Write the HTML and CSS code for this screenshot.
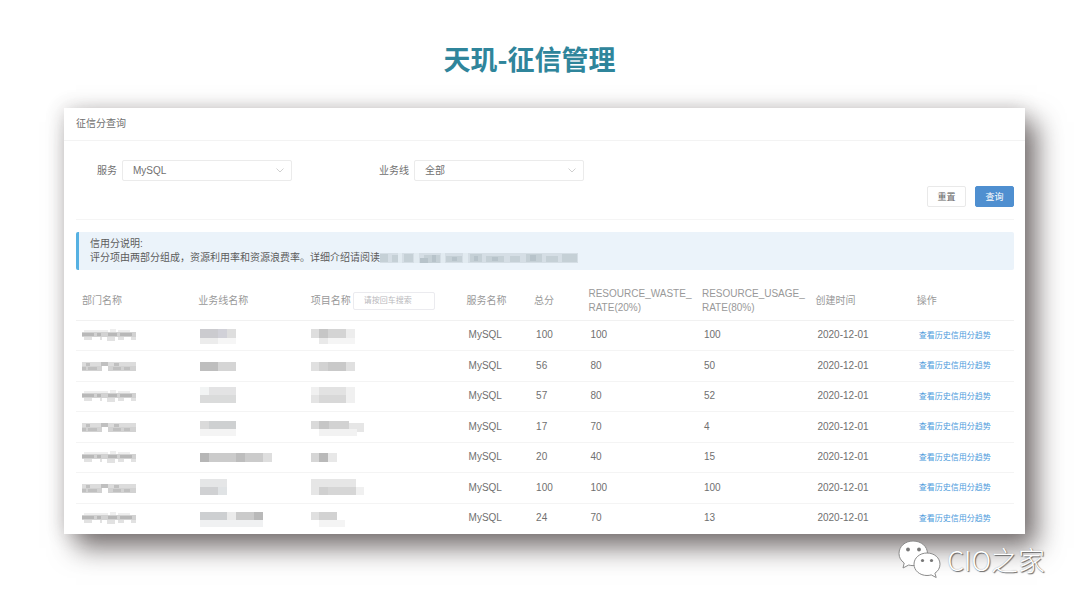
FILE: index.html
```html
<!DOCTYPE html>
<html lang="zh-CN">
<head>
<meta charset="utf-8">
<title>天玑-征信管理</title>
<link rel="stylesheet" href="styles.css">
</head>
<body>
<svg class="defs" aria-hidden="true">
  <symbol id="dept-a" viewBox="0 0 58 14">
    <path d="M2 2h24v2H2zM28 1h6v3h-6zM36 2h12v2H36z" fill="#eeeeee"/>
    <path d="M0 4h54v5H0z" fill="#d2d2d2"/>
    <path d="M0 5h12v3H0zM15 5h4v3h-4zM26 5h9v3h-9zM38 5h12v3H38z" fill="#b8b8b8"/>
    <path d="M2 9h8v3H2zM18 9h2v3h-2zM25 9h8v4h-8zM36 9h6v3h-6zM49 9h5v3h-5z" fill="#e2e2e2"/>
  </symbol>
  <symbol id="dept-b" viewBox="0 0 58 14">
    <path d="M0 3h54v4H0z" fill="#dcdcdc"/>
    <path d="M0 7h20v5H0zM26 7h28v5H26z" fill="#d2d2d2"/>
    <path d="M4 4h4v3H4zM19 3h7v4h-7zM32 4h5v3h-5zM0 8h4v3H0zM6 8h9v3H6zM31 8h8v3h-8zM42 8h6v3h-6z" fill="#c0c0c0"/>
  </symbol>
</svg>
<main class="slide">
  <h1 class="title">天玑-征信管理</h1>
  <section class="card">
    <h2 class="card-title">征信分查询</h2>
    <div class="card-body">
      <form class="filters">
        <div class="fields">
          <div class="field">
            <label for="service">服务</label>
            <span class="select-box">
              <select id="service"><option>MySQL</option></select>
              <svg class="chevron" viewBox="0 0 8 5"><path d="M.5.5 4 4 7.5.5"/></svg>
            </span>
          </div>
          <div class="field">
            <label for="line">业务线</label>
            <span class="select-box">
              <select id="line"><option>全部</option></select>
              <svg class="chevron" viewBox="0 0 8 5"><path d="M.5.5 4 4 7.5.5"/></svg>
            </span>
          </div>
        </div>
        <div class="actions">
          <button class="btn" type="reset">重置</button>
          <button class="btn primary" type="button">查询</button>
        </div>
      </form>
      <div class="notice">
        <p>信用分说明:</p>
        <p class="notice-line">评分项由两部分组成，资源利用率和资源浪费率。详细介绍请阅读
          <svg class="masked-link" viewBox="0 0 198 10" preserveAspectRatio="none">
            <path d="M0 0h198v10H0z" fill="#d5dee5"/>
            <path d="M0 1h8v8H0zM12 2h6v7h-6zM24 1h9v8h-9zM44 2h16v8H44zM66 3h16v6H66zM90 1h12v8H90zM106 3h18v6h-18zM130 3h10v6h-10zM146 1h16v8h-16zM166 3h12v6h-12zM182 1h15v8h-15z" fill="#c5d0d6"/>
            <path d="M40 5h8v5h-8zM52 2h4v7h-4zM72 4h5v4h-5zM94 3h4v5h-4zM112 4h6v4h-6zM150 2h6v6h-6z" fill="#b7c3ca"/>
            <path d="M18 0h4v10h-4zM34 0h5v10h-5zM61 0h4v10h-4zM83 0h5v10h-5z" fill="#e2ebf1"/>
          </svg>
        </p>
      </div>
      <table class="scores">
        <colgroup>
          <col class="c-dept"><col class="c-line"><col class="c-project"><col class="c-service"><col class="c-total"><col class="c-rate"><col class="c-rate"><col class="c-date"><col class="c-action">
        </colgroup>
        <thead>
          <tr>
            <th>部门名称</th><th>业务线名称</th>
            <th><span class="search"><label for="project">项目名称</label><input id="project" type="text" placeholder="请按回车搜索"></span></th>
            <th>服务名称</th><th>总分</th><th>RESOURCE_WASTE_<wbr>RATE(20%)</th><th>RESOURCE_USAGE_<wbr>RATE(80%)</th><th>创建时间</th><th>操作</th>
          </tr>
        </thead>
        <tbody>
          <tr>
            <td class="masked"><svg class="dept"><use href="#dept-a"/></svg></td>
            <td class="masked"><svg class="mosaic" viewBox="0 0 78 20"><path d="M2 4h27v9H2z" fill="#cbcbcf"/><path d="M20 4h9v9h-9z" fill="#d1d1d8"/><path d="M29 4h9v9h-9z" fill="#dedede"/><path d="M2 13h18v6H2z" fill="#ececec"/><path d="M20 13h18v6H20z" fill="#f6f6f6"/></svg></td>
            <td class="masked"><svg class="mosaic" viewBox="0 0 78 20"><path d="M0 4h8v9H0z" fill="#dedede"/><path d="M8 4h9v9H8z" fill="#c6c6c6"/><path d="M17 4h18v9H17z" fill="#d4d4d4"/><path d="M35 4h9v9h-9z" fill="#ededed"/><path d="M8 13h9v6H8z" fill="#e9e9e9"/><path d="M17 13h27v6H17z" fill="#f5f5f5"/></svg></td>
            <td>MySQL</td><td>100</td><td>100</td><td>100</td><td>2020-12-01</td><td><a href="#trend">查看历史信用分趋势</a></td>
          </tr>
          <tr>
            <td class="masked"><svg class="dept"><use href="#dept-b"/></svg></td>
            <td class="masked"><svg class="mosaic" viewBox="0 0 78 20"><path d="M2 6h18v9H2z" fill="#bebebe"/><path d="M20 6h18v9H20z" fill="#d5d5d5"/></svg></td>
            <td class="masked"><svg class="mosaic" viewBox="0 0 78 20"><path d="M0 6h44v9H0z" fill="#e0e0e0"/><path d="M8 6h9v9H8z" fill="#d2d2d2"/><path d="M17 6h18v9H17z" fill="#c9c9c9"/></svg></td>
            <td>MySQL</td><td>56</td><td>80</td><td>50</td><td>2020-12-01</td><td><a href="#trend">查看历史信用分趋势</a></td>
          </tr>
          <tr>
            <td class="masked"><svg class="dept"><use href="#dept-a"/></svg></td>
            <td class="masked"><svg class="mosaic" viewBox="0 0 78 20"><path d="M2 1h9v8H2z" fill="#f2f4f4"/><path d="M11 1h27v8H11z" fill="#e3e3e4"/><path d="M2 9h36v8H2z" fill="#dadbdb"/></svg></td>
            <td class="masked"><svg class="mosaic" viewBox="0 0 78 20"><path d="M0 1h44v16H0z" fill="#f0f0f0"/><path d="M8 1h27v8H8z" fill="#e2e2e2"/><path d="M0 9h8v8H0z" fill="#e4e4e4"/><path d="M8 9h27v8H8z" fill="#d8d8d8"/></svg></td>
            <td>MySQL</td><td>57</td><td>80</td><td>52</td><td>2020-12-01</td><td><a href="#trend">查看历史信用分趋势</a></td>
          </tr>
          <tr>
            <td class="masked"><svg class="dept"><use href="#dept-b"/></svg></td>
            <td class="masked"><svg class="mosaic" viewBox="0 0 78 20"><path d="M2 4h9v8H2z" fill="#dadada"/><path d="M11 4h27v8H11z" fill="#ced0d1"/><path d="M2 12h36v7H2z" fill="#f4f4f4"/></svg></td>
            <td class="masked"><svg class="mosaic" viewBox="0 0 78 20"><path d="M0 4h8v8H0z" fill="#dadada"/><path d="M8 4h10v8H8z" fill="#c6c6c6"/><path d="M18 4h20v9H18z" fill="#d2d2d2"/><path d="M38 6h15v9H38z" fill="#e6e6e6"/><path d="M8 12h38v7H8z" fill="#f2f2f2"/></svg></td>
            <td>MySQL</td><td>17</td><td>70</td><td>4</td><td>2020-12-01</td><td><a href="#trend">查看历史信用分趋势</a></td>
          </tr>
          <tr>
            <td class="masked"><svg class="dept"><use href="#dept-a"/></svg></td>
            <td class="masked"><svg class="mosaic" viewBox="0 0 78 20"><path d="M2 6h72v9H2z" fill="#cbcbcb"/><path d="M2 6h9v9H2z" fill="#b6b6b6"/><path d="M38 6h9v9h-9z" fill="#bdbdbd"/><path d="M65 6h9v9h-9z" fill="#dedede"/></svg></td>
            <td class="masked"><svg class="mosaic" viewBox="0 0 78 20"><path d="M0 6h8v9H0z" fill="#d6d6d6"/><path d="M8 6h9v9H8z" fill="#b9b9b9"/><path d="M17 6h9v9h-9z" fill="#e8e8e8"/></svg></td>
            <td>MySQL</td><td>20</td><td>40</td><td>15</td><td>2020-12-01</td><td><a href="#trend">查看历史信用分趋势</a></td>
          </tr>
          <tr>
            <td class="masked"><svg class="dept"><use href="#dept-b"/></svg></td>
            <td class="masked"><svg class="mosaic" viewBox="0 0 78 20"><path d="M2 1h27v8H2z" fill="#e5e6e7"/><path d="M2 9h18v8H2z" fill="#d0d1d3"/><path d="M20 9h9v8h-9z" fill="#e0e3e5"/></svg></td>
            <td class="masked"><svg class="mosaic" viewBox="0 0 78 20"><path d="M0 1h45v16H0z" fill="#e6e6e6"/><path d="M8 9h9v8H8z" fill="#d0d0d0"/><path d="M17 9h28v8H17z" fill="#d6d6d6"/><path d="M45 9h8v8h-8z" fill="#f0f0f0"/></svg></td>
            <td>MySQL</td><td>100</td><td>100</td><td>100</td><td>2020-12-01</td><td><a href="#trend">查看历史信用分趋势</a></td>
          </tr>
          <tr>
            <td class="masked"><svg class="dept"><use href="#dept-a"/></svg></td>
            <td class="masked"><svg class="mosaic" viewBox="0 0 78 20"><path d="M2 4h27v8H2z" fill="#cdcfd1"/><path d="M29 4h9v8h-9z" fill="#ebebeb"/><path d="M38 4h18v8H38z" fill="#cacaca"/><path d="M56 4h9v8h-9z" fill="#b9b9b9"/><path d="M2 12h63v7H2z" fill="#f0f1f2"/></svg></td>
            <td class="masked"><svg class="mosaic" viewBox="0 0 78 20"><path d="M0 4h8v8H0z" fill="#e0e0e0"/><path d="M8 4h18v8H8z" fill="#d2d2d2"/><path d="M8 12h26v7H8z" fill="#f4f4f4"/></svg></td>
            <td>MySQL</td><td>24</td><td>70</td><td>13</td><td>2020-12-01</td><td><a href="#trend">查看历史信用分趋势</a></td>
          </tr>
        </tbody>
      </table>
    </div>
  </section>
  <div class="watermark">
    <svg class="wechat" viewBox="0 0 44 40">
      <g fill="#fff" stroke="#8b8b8b" stroke-width="1">
        <path d="M15 1C7 1 1 6.500 1 13.500c0 4 2 7.200 5.200 9.500L5 28l5.700-3c1.400.4 2.800.6 4.300.6 8.300 0 14.500-5.400 14.500-12.100C29.500 6.500 23.300 1 15 1z"/>
        <path d="M29 13c-7.300 0-13 4.900-13 11.200S21.700 35.500 29 35.500c1.500 0 2.900-.2 4.200-.6l5 2.600-1.300-4.300c3.200-2.100 5.100-5.300 5.100-9C42 17.900 36.300 13 29 13z"/>
      </g>
      <g fill="#777"><circle cx="10" cy="9.500" r="1.900"/><circle cx="21" cy="9.500" r="1.900"/><circle cx="24.500" cy="20.500" r="1.600"/><circle cx="33.500" cy="20.500" r="1.600"/></g>
    </svg>
    <span>CIO之家</span>
  </div>
</main>
</body>
</html>
```

FILE: styles.css
```css
* { box-sizing: border-box; }

body {
  margin: 0;
  background: #fff;
  color: #707070;
  font: 10px/14px "Liberation Sans", "Noto Sans CJK SC", sans-serif;
}

h1, h2, p { margin: 0; }

.defs { display: none; }

.slide {
  position: relative;
  min-height: 100vh;
  padding: 39px 55px 32px 64px;
}

.title {
  padding-right: 30px;
  color: #2f859b;
  font: bold 27px/40px "Noto Sans CJK SC", sans-serif;
  text-align: center;
}

.card {
  margin-top: 29px;
  padding-bottom: 1px;
  background: #fff;
  box-shadow: 12px 14px 25px rgba(58, 48, 48, .66), 0 0 18px rgba(60, 50, 50, .2);
}

.card-title {
  padding: 9px 12px;
  border-bottom: 1px solid #f3f3f3;
  font-size: 10px;
  font-weight: 400;
  line-height: 14px;
}

.card-body { padding: 19px 11px 0 12px; }

.filters {
  padding-bottom: 12px;
  border-bottom: 1px solid #f5f5f5;
}

.fields {
  display: flex;
  gap: 87px;
  padding-left: 21px;
}

.field {
  display: flex;
  align-items: center;
  gap: 5px;
}

.select-box { position: relative; }

.select-box select {
  display: block;
  appearance: none;
  width: 170px;
  height: 21px;
  padding: 0 10px;
  border: 1px solid #ebebeb;
  border-radius: 2px;
  background: #fff;
  color: #707070;
  font: inherit;
}

.chevron {
  position: absolute;
  top: 8px;
  right: 8px;
  width: 8px;
  height: 5px;
  fill: none;
  stroke: #d0d0d0;
  pointer-events: none;
}

.actions {
  display: flex;
  justify-content: flex-end;
  gap: 9px;
  margin-top: 5px;
}

.btn {
  width: 39px;
  height: 21px;
  padding: 0;
  border: 1px solid #e9e9e9;
  border-radius: 2px;
  background: #fff;
  color: #666;
  font: inherit;
  font-size: 9px;
}

.btn.primary {
  border-color: #4f8fd0;
  background: #4f8fd0;
  color: #fff;
}

.notice {
  margin-top: 12px;
  padding: 5px 11px;
  border-left: 3px solid #56b1e2;
  border-radius: 2px;
  background: #ebf3fa;
  color: #5c5c5c;
}

.notice-line {
  display: flex;
  align-items: center;
}

.masked-link {
  width: 198px;
  height: 10px;
}

.scores {
  width: 100%;
  margin-top: 12px;
  border-collapse: collapse;
  table-layout: fixed;
}

.c-dept { width: 12.4%; }
.c-line { width: 12%; }
.c-project { width: 16.6%; }
.c-service { width: 7.2%; }
.c-total { width: 5.8%; }
.c-rate { width: 12.1%; }
.c-date { width: 10.8%; }

.scores th {
  height: 38px;
  padding: 0 0 0 6px;
  border-bottom: 1px solid #f1f1f1;
  color: #999;
  font-weight: 400;
  text-align: left;
}

.scores td {
  height: 30px;
  padding: 0 0 0 8px;
  border-bottom: 1px solid #f4f4f4;
}

.scores tr:nth-child(even) td { height: 31px; }
.scores tr:last-child td { border-bottom: 0; }
.scores td.masked { padding-left: 6px; }

.scores a {
  color: #4c9bdc;
  font-size: 8px;
  text-decoration: none;
}

.search {
  display: flex;
  align-items: center;
  gap: 2px;
}

.search input {
  width: 82px;
  height: 18px;
  padding: 0 10px;
  border: 1px solid #ebebef;
  border-radius: 2px;
  font: inherit;
  font-size: 8px;
}

.search input::placeholder { color: #b9b9bd; }

.dept {
  display: block;
  width: 58px;
  height: 14px;
}

.mosaic {
  display: block;
  width: 78px;
  height: 20px;
}

.watermark {
  position: absolute;
  right: 35px;
  bottom: 28px;
  display: flex;
  align-items: center;
  gap: 5px;
  color: #fff;
  font: 300 27px/40px "Noto Sans CJK SC", sans-serif;
  text-shadow: 1px 1px 1px #666, 0 0 1px #999;
}

.wechat {
  width: 44px;
  height: 40px;
}
```
